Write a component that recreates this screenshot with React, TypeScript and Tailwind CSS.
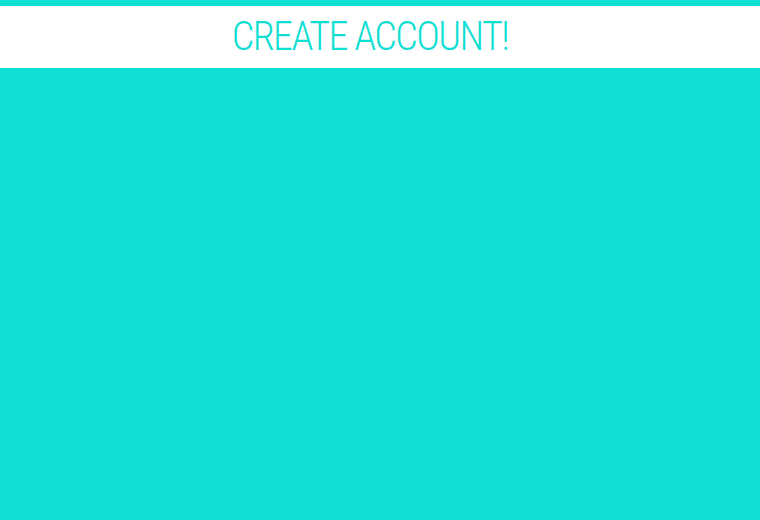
import React from "react";

const App: React.FC = () => {
  return (
    <div className="min-h-[520px] bg-[#10ded3] pt-[6px]">
      <header className="flex h-[62px] items-center justify-center bg-white pr-5">
        <h1 className="font-['Roboto',sans-serif] text-[40px] font-light leading-none tracking-[-1.6px] text-[#10ded3] font-stretch-condensed">
          CREATE ACCOUNT!
        </h1>
      </header>
    </div>
  );
};

export default App;
